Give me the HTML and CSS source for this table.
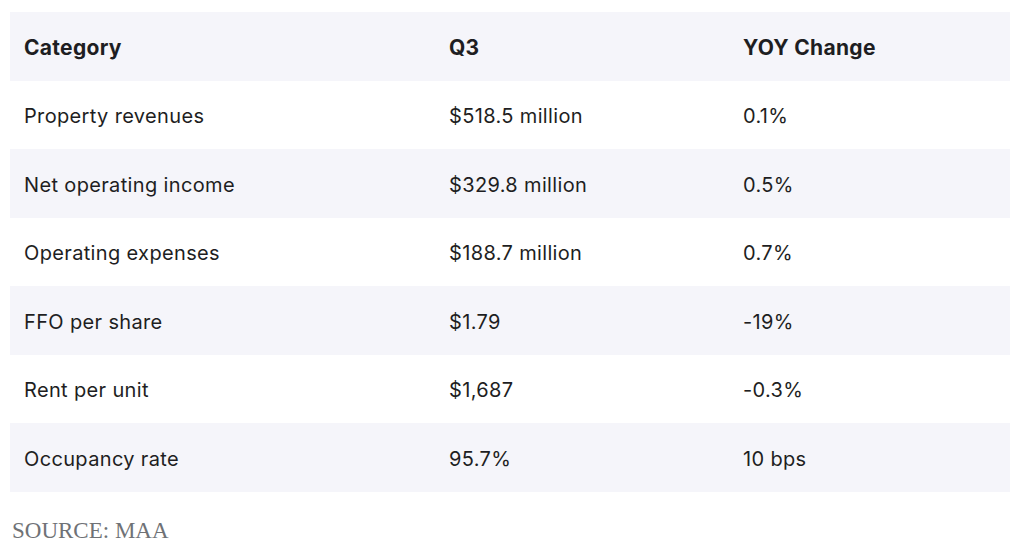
FILE: index.html
```html
<!DOCTYPE html>
<html>
<head>
<meta charset="utf-8">
<link rel="stylesheet" href="styles.css">
</head>
<body>
<div class="wrap">
  <table class="data">
    <thead>
      <tr><th>Category</th><th>Q3</th><th>YOY Change</th></tr>
    </thead>
    <tbody>
      <tr><td>Property revenues</td><td>$518.5 million</td><td>0.1%</td></tr>
      <tr><td>Net operating income</td><td>$329.8 million</td><td>0.5%</td></tr>
      <tr><td>Operating expenses</td><td>$188.7 million</td><td>0.7%</td></tr>
      <tr><td>FFO per share</td><td>$1.79</td><td>-19%</td></tr>
      <tr><td>Rent per unit</td><td>$1,687</td><td>-0.3%</td></tr>
      <tr><td>Occupancy rate</td><td>95.7%</td><td>10 bps</td></tr>
    </tbody>
  </table>
  <p class="source">SOURCE: MAA</p>
</div>
</body>
</html>
```
FILE: styles.css
```css
html, body {
  margin: 0;
  padding: 0;
  background: #ffffff;
}
.wrap {
  padding: 12px 14px 0 10px;
}
.data {
  width: 1000px;
  border-collapse: collapse;
  font-family: Inter, "Noto Sans", sans-serif;
  font-size: 20px;
  color: #1e1e22;
}
.data th, .data td {
  text-align: left;
  padding: 3px 14px 0 14px;
  height: 68.5px;
  vertical-align: middle;
  box-sizing: border-box;
}
.data td {
  letter-spacing: 0.35px;
}
.data th {
  font-weight: 700;
  font-size: 21px;
  letter-spacing: 0.3px;
  background: #f5f5fa;
}
.data th:nth-child(1), .data td:nth-child(1) { width: 425px; }
.data th:nth-child(2), .data td:nth-child(2) { width: 294px; }
.data tbody tr:nth-child(even) td {
  background: #f5f5fa;
}
.source {
  margin: 26px 0 0 2px;
  font-family: "Liberation Serif", serif;
  font-size: 23px;
  color: #6f7276;
}
```
